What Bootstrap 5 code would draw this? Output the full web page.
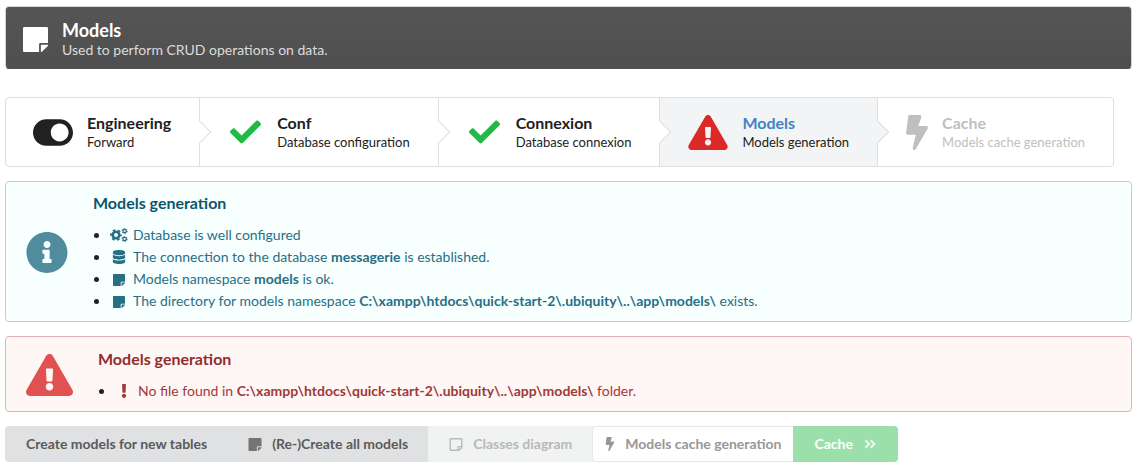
<!DOCTYPE html>
<html lang="en">
<head>
<meta charset="utf-8">
<meta name="viewport" content="width=device-width, initial-scale=1">
<title>Models</title>
<link href="https://cdn.jsdelivr.net/npm/bootstrap@5.3.0/dist/css/bootstrap.min.css" rel="stylesheet">
<style>
body{font-family:Lato,"Liberation Sans",sans-serif;font-size:14px;line-height:20px;color:#212121;background:#fff}
svg{fill:currentColor;flex:none;display:block}
.page{padding:6px 11px 10px 5px}
.banner{background:linear-gradient(#555,#4f4f4f);border:1px solid #d4d4d5;border-bottom-color:#4f4f4f;border-radius:4px;color:#fff;padding:12px 17px 9px;gap:14px;margin-bottom:28px}
.banner h1{font-size:18px;line-height:22px;font-weight:700;margin:0}
.banner p{color:#dcdcdc;margin:0;line-height:18px}
.wizard{border:1px solid #dededf;border-radius:4px;margin:0 0 14px;padding:0;list-style:none}
.stage{position:relative;border-right:1px solid #dededf;height:68px;padding:0 28px 0 27px;gap:14px}
.stage + .stage{padding-left:28px}
.stage:last-child{border-right:0}
.stage:not(:last-child)::after{content:"";position:absolute;z-index:1;right:-9px;top:26px;width:16px;height:16px;background:#fff;border:solid #dededf;border-width:0 1px 1px 0;transform:rotate(-45deg)}
.stage.current,.stage.current::after{background:#f3f4f5!important}
.stage strong{display:block;font-size:16px;line-height:20px}
.stage span{display:block;font-size:13px;line-height:18px}
.stage.current strong{color:#4183c4}
.stage.off{color:#bfbfbf}
.green{color:#21ba45}.red{color:#db2828}
.notice{border:1px solid;border-radius:4px;padding:10px 20px 9px;gap:25px;margin-bottom:14px}
.notice h2{font-size:16px;line-height:22px;font-weight:700;margin:0 0 10px}
.notice ul{margin:0;padding-left:17px;color:#212121}
.notice li{line-height:22px}
.line svg{width:18px;display:inline-block;margin-right:5px;vertical-align:-2px}
.info{background:#f8ffff;border-color:#a9d5de;color:#276f86}
.info h2{color:#0e566c}
.problem{background:#fff6f6;border-color:#e0b4b4;color:#9f3a38;padding-top:11px}
.problem h2{color:#912d2b}
.line.teal{color:#276f86}.line.wine{color:#9f3a38}
.faded{opacity:.8}
.actions .btn{--bs-btn-font-size:14px;--bs-btn-line-height:20px;--bs-btn-border-width:0;--bs-btn-disabled-opacity:1;--bs-btn-border-radius:4px;font-weight:700;padding:8px 21px;gap:10px;height:36px;color:#5a5a5a;background:#e0e1e2;flex:none}
.actions .btn.unavailable{color:#b8b9b9;background:#f1f2f2}
.actions .btn.outline{color:#979797;background:#fff;box-shadow:inset 0 0 0 1px #e9e9ea;padding:8px 13px;border-radius:4px 0 0 4px}
.actions .btn.go{color:#fff;background:#9be0aa}
</style>
</head>
<body>
<svg width="0" height="0" class="position-absolute" aria-hidden="true">
<symbol id="note" viewBox="0 32 448 448"><path d="M312 320h136V56c0-13.300-10.700-24-24-24H24C10.700 32 0 42.700 0 56v400c0 13.300 10.700 24 24 24h264V344c0-13.200 10.800-24 24-24zm129 55l-98 98c-4.500 4.500-10.600 7-17 7h-6V352h128v6.100c0 6.300-2.500 12.400-7 16.900z"/></symbol>
<symbol id="note-open" viewBox="0 32 448 448"><path d="M448 348.106V80c0-26.510-21.490-48-48-48H48C21.490 32 0 53.490 0 80v351.988c0 26.510 21.490 48 48 48h268.118a48 48 0 0 0 33.941-14.059l83.882-83.882A48 48 0 0 0 448 348.106zm-128 80v-76.118h76.118L320 428.106zM400 80v223.988H296c-13.255 0-24 10.745-24 24v104H48V80h352z"/></symbol>
<symbol id="check" viewBox="-33 65 578 382"><path d="M173.898 439.404l-166.400-166.400c-9.997-9.997-9.997-26.206 0-36.204l36.203-36.204c9.997-9.998 26.207-9.998 36.204 0L192 312.690 432.095 72.596c9.997-9.997 26.207-9.997 36.204 0l36.203 36.204c9.997 9.997 9.997 26.206 0 36.204l-294.400 294.401c-9.998 9.997-26.207 9.997-36.204-.001z"/></symbol>
<symbol id="warn" viewBox="0 0 576 512"><path d="M569.517 440.013C587.975 472.007 564.806 512 527.940 512H48.054c-36.937 0-59.999-40.055-41.577-71.987L246.423 23.985c18.467-32.009 64.720-31.951 83.154 0l239.940 416.028zM288 354c-25.405 0-46 20.595-46 46s20.595 46 46 46 46-20.595 46-46-20.595-46-46-46zm-43.673-165.346l7.418 136c.347 6.364 5.609 11.346 11.982 11.346h48.546c6.373 0 11.635-4.982 11.982-11.346l7.418-136c.375-6.874-5.098-12.654-11.982-12.654h-63.383c-6.884 0-12.356 5.780-11.981 12.654z"/></symbol>
<symbol id="bolt" viewBox="0 0 320 512"><path d="M296 160H180.600l42.600-129.800C227.200 15 215.700 0 200 0H56C44 0 33.800 8.900 32.200 20.800l-32 240C-1.700 275.200 9.500 288 24 288h118.700L96.600 482.500c-3.600 15.200 8 29.500 23.300 29.500 8.400 0 16.400-4.400 20.800-12l176-304c9.300-15.900-2.200-36-20.700-36z"/></symbol>
<symbol id="about" viewBox="8 8 496 496"><path d="M256 8C119.043 8 8 119.083 8 256c0 136.997 111.043 248 248 248s248-111.003 248-248C504 119.083 392.957 8 256 8zm0 110c23.196 0 42 18.804 42 42s-18.804 42-42 42-42-18.804-42-42 18.804-42 42-42zm56 254c0 6.627-5.373 12-12 12h-88c-6.627 0-12-5.373-12-12v-24c0-6.627 5.373-12 12-12h12v-64h-12c-6.627 0-12-5.373-12-12v-24c0-6.627 5.373-12 12-12h64c6.627 0 12 5.373 12 12v100h12c6.627 0 12 5.373 12 12v24z"/></symbol>
<symbol id="db" viewBox="0 0 448 512"><path d="M448 73.143v45.714C448 159.143 347.667 192 224 192S0 159.143 0 118.857V73.143C0 32.857 100.333 0 224 0s224 32.857 224 73.143zM448 176v102.857C448 319.143 347.667 352 224 352S0 319.143 0 278.857V176c48.125 33.143 136.208 48.572 224 48.572S399.874 209.143 448 176zm0 160v102.857C448 479.143 347.667 512 224 512S0 479.143 0 438.857V336c48.125 33.143 136.208 48.572 224 48.572S399.874 369.143 448 336z"/></symbol>
<symbol id="toggle" viewBox="0 64 576 384"><path d="M384 64H192C86 64 0 150 0 256s86 192 192 192h192c106 0 192-86 192-192S490 64 384 64zm0 320c-70.800 0-128-57.300-128-128 0-70.800 57.300-128 128-128 70.800 0 128 57.300 128 128 0 70.800-57.300 128-128 128z"/></symbol>
<symbol id="bang" viewBox="0 0 192 512"><path d="M176 432c0 44.112-35.888 80-80 80s-80-35.888-80-80 35.888-80 80-80 80 35.888 80 80zM25.260 25.199l13.600 272C39.499 309.972 50.041 320 62.830 320h66.340c12.789 0 23.331-10.028 23.970-22.801l13.600-272C167.425 11.490 156.496 0 142.770 0H49.230C35.504 0 24.575 11.490 25.260 25.199z"/></symbol>
<symbol id="gears" viewBox="0 0 18 14"><g fill="none" stroke="currentColor"><circle cx="6" cy="7" r="3.300" stroke-width="2.600"/><circle cx="6" cy="7" r="5.100" stroke-width="1.600" stroke-dasharray="2.600 2.740" stroke-dashoffset="1.300"/><circle cx="14.600" cy="3" r="1.700" stroke-width="1.300"/><circle cx="14.600" cy="3" r="2.600" stroke-width="1" stroke-dasharray="1.360 1.360"/><circle cx="14.600" cy="11" r="1.700" stroke-width="1.300"/><circle cx="14.600" cy="11" r="2.600" stroke-width="1" stroke-dasharray="1.360 1.360"/></g></symbol>
<symbol id="forward" viewBox="0 0 12 10"><path d="M1.500 1.300L5.200 5L1.500 8.700M6.700 1.300L10.400 5L6.700 8.700" fill="none" stroke="currentColor" stroke-width="2"/></symbol>
</svg>

<main class="page">
  <header class="banner d-flex align-items-center">
    <svg width="25" height="25"><use href="#note"/></svg>
    <div><h1>Models</h1><p>Used to perform CRUD operations on data.</p></div>
  </header>

  <ol class="wizard d-inline-flex align-top">
    <li class="stage d-flex align-items-center"><svg width="40" height="27"><use href="#toggle"/></svg><div><strong>Engineering</strong><span>Forward</span></div></li>
    <li class="stage d-flex align-items-center"><svg class="green" width="35" height="24"><use href="#check"/></svg><div><strong>Conf</strong><span>Database configuration</span></div></li>
    <li class="stage d-flex align-items-center"><svg class="green" width="35" height="24"><use href="#check"/></svg><div><strong>Connexion</strong><span>Database connexion</span></div></li>
    <li class="stage current d-flex align-items-center" aria-current="step"><svg class="red" width="40" height="35"><use href="#warn"/></svg><div><strong>Models</strong><span>Models generation</span></div></li>
    <li class="stage off d-flex align-items-center"><svg width="22" height="35"><use href="#bolt"/></svg><div><strong>Cache</strong><span>Models cache generation</span></div></li>
  </ol>

  <section class="notice info d-flex align-items-center">
    <svg class="faded" width="42" height="41"><use href="#about"/></svg>
    <div>
      <h2>Models generation</h2>
      <ul>
        <li><span class="line teal"><svg height="14"><use href="#gears"/></svg>Database is well configured</span></li>
        <li><span class="line teal"><svg height="14"><use href="#db"/></svg>The connection to the database <b>messagerie</b> is established.</span></li>
        <li><span class="line teal"><svg height="12"><use href="#note"/></svg>Models namespace <b>models</b> is ok.</span></li>
        <li><span class="line teal"><svg height="12"><use href="#note"/></svg>The directory for models namespace <b>C:\xampp\htdocs\quick-start-2\.ubiquity\..\app\models\</b> exists.</span></li>
      </ul>
    </div>
  </section>

  <section class="notice problem d-flex align-items-center">
    <svg class="red faded" width="47" height="42"><use href="#warn"/></svg>
    <div>
      <h2>Models generation</h2>
      <ul>
        <li><span class="line wine"><svg height="14"><use href="#bang"/></svg>No file found in <b>C:\xampp\htdocs\quick-start-2\.ubiquity\..\app\models\</b> folder.</span></li>
      </ul>
    </div>
  </section>

  <div class="actions btn-group d-inline-flex align-top" role="group" aria-label="Models actions">
    <button type="button" class="btn d-flex align-items-center">Create models for new tables</button>
    <button type="button" class="btn d-flex align-items-center"><svg class="faded" width="14" height="13"><use href="#note"/></svg>(Re-)Create all models</button>
    <button type="button" class="btn unavailable d-flex align-items-center" disabled><svg width="14" height="13"><use href="#note-open"/></svg>Classes diagram</button>
    <button type="button" class="btn outline d-flex align-items-center"><svg width="10" height="14"><use href="#bolt"/></svg>Models cache generation</button>
    <button type="button" class="btn go d-flex align-items-center">Cache<svg class="faded" width="14" height="10"><use href="#forward"/></svg></button>
  </div>
</main>
<script src="https://cdn.jsdelivr.net/npm/bootstrap@5.3.0/dist/js/bootstrap.bundle.min.js"></script>
</body>
</html>
